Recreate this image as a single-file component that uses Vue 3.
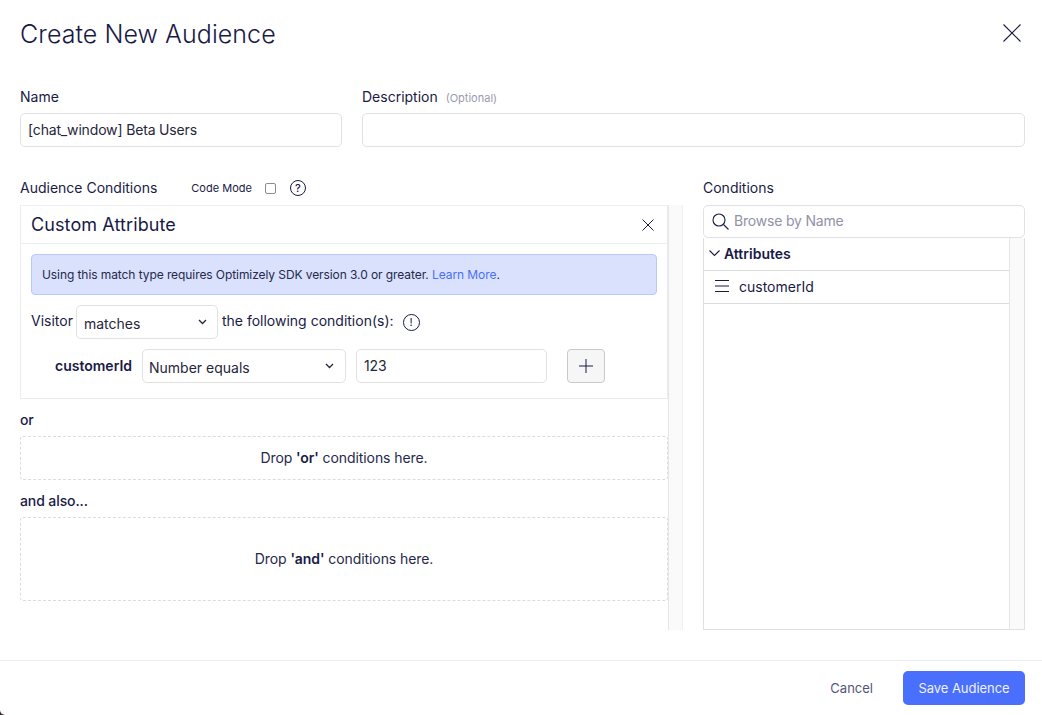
<script setup>
const nameValue = '[chat_window] Beta Users'
const conditionValue = '123'
</script>

<template>
  <div class="modal">
    <header class="head">
      <h1>Create New Audience</h1>
      <svg class="close" width="18" height="18" viewBox="0 0 18 18"><path d="M.5.5l17 17M17.5.5l-17 17" /></svg>
    </header>

    <main class="body">
      <div class="fields">
        <div class="field name">
          <label>Name</label>
          <input class="input" :value="nameValue" />
        </div>
        <div class="field desc">
          <label>Description <small>(Optional)</small></label>
          <input class="input" />
        </div>
      </div>

      <div class="workspace">
        <section class="left">
          <div class="left-title">
            <span class="label">Audience Conditions</span>
            <span class="code">Code Mode</span>
            <span class="check"></span>
            <span class="help">?</span>
          </div>
          <div class="left-scroll">
            <div class="builder">
              <div class="card">
                <div class="card-head">
                  <h2>Custom Attribute</h2>
                  <svg width="12" height="12" viewBox="0 0 12 12" class="card-close"><path d="M.5.5l11 11M11.5.5l-11 11" /></svg>
                </div>
                <div class="card-body">
                  <div class="notice">Using this match type requires Optimizely SDK version 3.0 or greater. <a>Learn More</a>.</div>
                  <div class="visitor">
                    <span class="lift">Visitor</span>
                    <div class="select sel-match">
                      <span>matches</span>
                      <svg width="9" height="6" viewBox="0 0 9 6"><path d="M1 1l3.5 3.5L8 1" /></svg>
                    </div>
                    <span class="lift">the following condition(s):</span>
                    <span class="bang">!</span>
                  </div>
                  <div class="rule">
                    <b class="lift-b">customerId</b>
                    <div class="select sel-type">
                      <span>Number equals</span>
                      <svg width="9" height="6" viewBox="0 0 9 6"><path d="M1 1l3.5 3.5L8 1" /></svg>
                    </div>
                    <input class="input value" :value="conditionValue" />
                    <button class="plus">
                      <svg width="14" height="14" viewBox="0 0 14 14"><path d="M7 0v14M0 7h14" /></svg>
                    </button>
                  </div>
                </div>
              </div>
              <div class="join or-join">or</div>
              <div class="drop drop-or">Drop&nbsp;<b>'or'</b>&nbsp;conditions here.</div>
              <div class="join and-join">and also...</div>
              <div class="drop drop-and">Drop&nbsp;<b>'and'</b>&nbsp;conditions here.</div>
            </div>
            <div class="track"></div>
          </div>
        </section>

        <aside class="right">
          <div class="label right-label">Conditions</div>
          <div class="search">
            <svg width="17" height="17" viewBox="0 0 17 17"><circle cx="7" cy="7" r="6" /><path d="M11.5 11.5l5 5" /></svg>
            <span>Browse by Name</span>
          </div>
          <div class="list">
            <div class="rows">
              <div class="row group">
                <svg width="11" height="7" viewBox="0 0 11 7"><path d="M.5.5l5 5 5-5" /></svg>
                <b>Attributes</b>
              </div>
              <div class="row item">
                <svg width="14" height="12" viewBox="0 0 14 12"><path d="M0 .5h14M0 6h14M0 11.5h14" /></svg>
                <span>customerId</span>
              </div>
            </div>
            <div class="list-track"></div>
          </div>
        </aside>
      </div>
    </main>

    <footer class="foot">
      <span class="cancel">Cancel</span>
      <button class="save">Save Audience</button>
    </footer>
  </div>
</template>

<style>
html, body { margin: 0; background: #2e2522; }
</style>

<style scoped>
.modal {
  width: 1042px; height: 715px; display: flex; flex-direction: column;
  background: #fff; color: #191a45; font-family: Inter, "Noto Sans", sans-serif;
  font-size: 14px; border-bottom-left-radius: 5px; overflow: hidden; box-sizing: border-box;
}
.modal * { box-sizing: border-box; }
.head { height: 87px; flex: none; padding: 18px 21px 0 20px; display: flex; justify-content: space-between; align-items: flex-start; }
h1 { margin: 0; font-size: 25px; font-weight: 300; line-height: 32px; letter-spacing: .06px; }
.close { margin-top: 6px; }
.close path { stroke: #191a45; stroke-width: 1.1; fill: none; }
.body { flex: 1; padding: 0 17px 30px 20px; min-height: 0; display: flex; flex-direction: column; }
.fields { display: flex; gap: 20px; }
.field { display: flex; flex-direction: column; gap: 6px; }
.field label { height: 20px; line-height: 20px; }
.field small { font-size: 11px; line-height: 1; color: #9a9ab0; margin-left: 4px; }
.name { width: 322px; }
.desc { flex: 1; }
.input {
  height: 34px; border: 1px solid #e2e2e2; border-radius: 5px; padding: 0 7px 2px; font: 14px Inter, sans-serif;
  letter-spacing: -.16px; color: #26263a; outline: none; background: #fff; width: 100%;
}
.workspace { flex: 1; display: flex; margin-top: 31px; min-height: 0; justify-content: space-between; }
.left { width: 663px; display: flex; flex-direction: column; }
.left-title { height: 20px; display: flex; align-items: center; margin-bottom: 7px; }
.label { line-height: 20px; }
.code { font-size: 11px; margin-left: 34px; }
.check { width: 11px; height: 11px; border: 1px solid #8d8d8d; border-radius: 2px; margin-left: 13px; margin-top: 1px; }
.help {
  width: 16px; height: 16px; border: 1.2px solid #191a45; border-radius: 50%; margin-left: 14px;
  font-size: 11px; font-weight: 500; display: flex; align-items: center; justify-content: center;
}
.left-scroll { flex: 1; display: flex; min-height: 0; }
.builder { width: 648px; }
.track, .list-track {
  width: 15px; background: #fafafa; border-left: 1px solid #e6e6e6; border-right: 1px solid #f0f0f0;
}
.card { height: 194px; border: 1px solid #ececec; border-top-color: #efefef; }
.card-head { height: 38px; border-bottom: 1px solid #ececec; display: flex; align-items: center; justify-content: space-between; padding: 0 13px 0 10px; }
h2 { margin: 0; font-size: 18px; font-weight: 400; line-height: 24px; letter-spacing: .1px; }
.card-close path { stroke: #191a45; stroke-width: 1; fill: none; }
.card-body { padding: 10px 10px 0; }
.notice {
  height: 41px; background: #d9e1fd; border: 1px solid #b9c8fb; border-radius: 4px; padding: 0 10px;
  font-size: 12px; line-height: 39px; white-space: nowrap; color: #26284a; letter-spacing: -.08px;
}
.notice a { color: #4a6ffc; }
.visitor { display: flex; align-items: center; margin-top: 10px; height: 34px; }
.lift { margin-bottom: 3px; }
.lift-b { padding-bottom: 2px; }
.select {
  height: 34px; border: 1px solid #e2e2e2; border-radius: 5px; display: flex; align-items: center;
  justify-content: space-between; font-size: 14px; color: #26263a; background: #fff;
}
.select span { position: relative; top: 1px; }
.select svg { fill: none; stroke: #26263a; stroke-width: 1.3; }
.sel-match { width: 142px; margin: 0 4px 0 3px; padding: 0 10px 0 7px; }
.bang {
  width: 17px; height: 17px; border: 1.2px solid #191a45; border-radius: 50%; margin-left: 9px;
  font-size: 11px; font-weight: 400; display: flex; align-items: center; justify-content: center;
}
.rule { display: flex; align-items: center; margin-top: 10px; height: 34px; padding-left: 24px; }
.rule b { font-weight: 600; width: 87px; }
.sel-type { width: 204px; padding: 0 11px 0 6px; }
.value { width: 191px; margin-left: 10px; }
.plus {
  width: 38px; height: 34px; margin-left: 20px; background: #f6f6f6; border: 1px solid #c9c9c9; border-radius: 4px;
  padding: 0; display: flex; align-items: center; justify-content: center;
}
.plus path { stroke: #191a45; stroke-width: 1; fill: none; }
.join { font-weight: 500; line-height: 20px; letter-spacing: -.1px; }
.or-join { margin-top: 11px; }
.and-join { margin-top: 11px; }
.drop {
  border: 1px dashed #dcdcdc; border-radius: 3px; display: flex; align-items: center; justify-content: center;
  margin-top: 6px; padding-bottom: 2px; color: #26284a; letter-spacing: -.08px;
}
.drop b { font-weight: 600; color: #191a45; }
.drop-or { height: 44px; }
.drop-and { height: 84px; }
.right { width: 322px; display: flex; flex-direction: column; }
.right-label { margin-bottom: 7px; }
.search {
  height: 33px; border: 1px solid #e2e2e2; border-radius: 5px; display: flex; align-items: center; padding: 0 0 0 8px;
  color: #9191a8; flex: none;
}
.search span { margin: 0 0 2px 5px; letter-spacing: -.2px; }
.search svg { fill: none; stroke: #191a45; stroke-width: 1.1; }
.list {
  flex: 1; display: flex; border: 1px solid #e0e0e0; border-top: 0; border-right: 0; min-height: 0;
}
.rows { flex: 1; }
.list-track { width: 16px; border-left-width: 1px; border-right: 1px solid #e0e0e0; }
.row { height: 33px; border-bottom: 1px solid #dcdcdc; display: flex; align-items: center; padding-bottom: 2px; }
.group { padding-left: 5px; }
.group svg { fill: none; stroke: #191a45; stroke-width: 1.1; margin-right: 4px; }
.group b { font-weight: 600; }
.item { padding-left: 11px; }
.item svg { fill: none; stroke: #191a45; stroke-width: 1; margin-right: 10px; }
.foot {
  height: 55px; flex: none; border-top: 1px solid #ececec; display: flex; align-items: center; justify-content: flex-end;
  padding: 0 17px 0 0; gap: 30px;
}
.cancel { font-size: 13px; color: #55557a; }
.save {
  width: 122px; height: 34px; background: #4a6ffc; border: 0; border-radius: 5px; color: #eef1ff; padding: 0;
  font: 13px Inter, sans-serif; letter-spacing: -.05px;
}
</style>
